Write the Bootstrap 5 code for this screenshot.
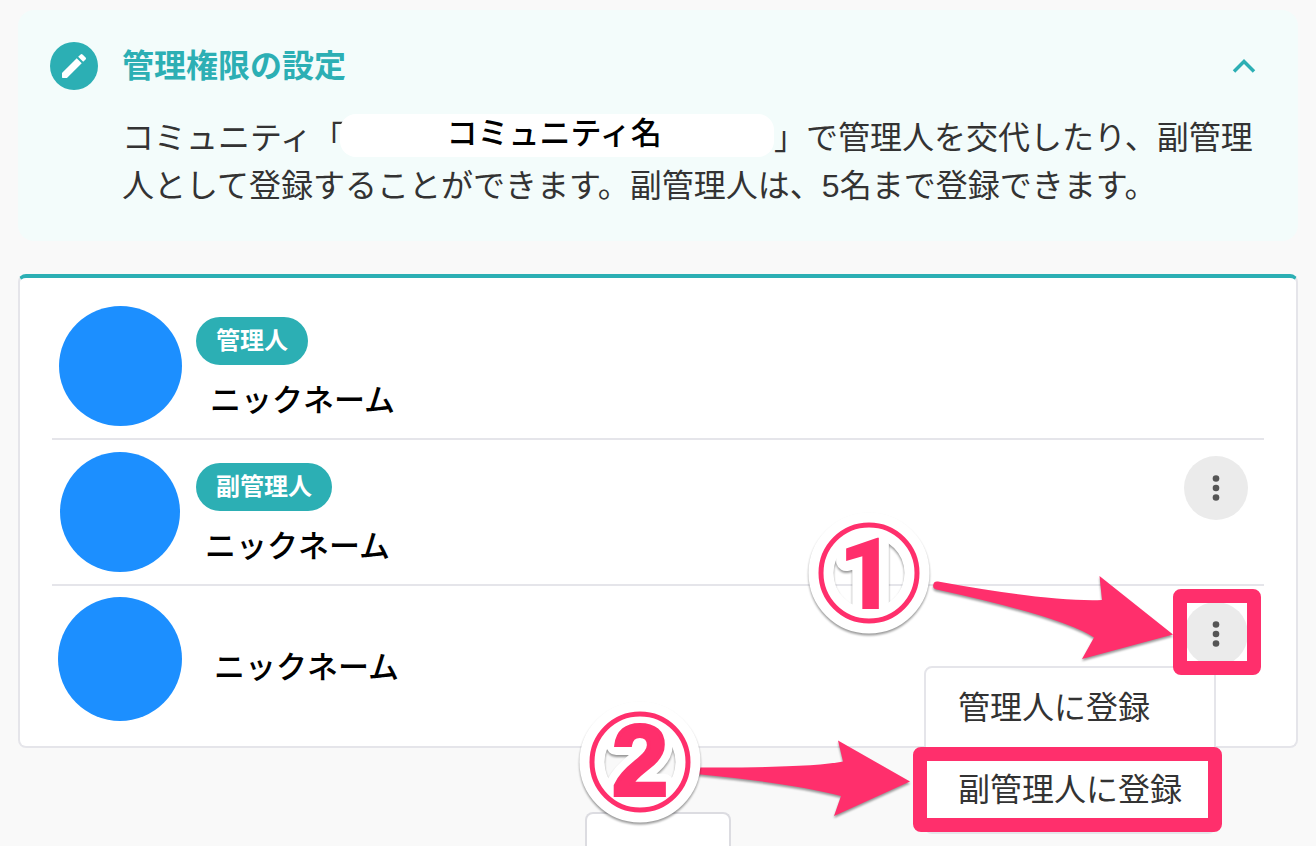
<!DOCTYPE html>
<html lang="ja">
<head>
<meta charset="utf-8">
<meta name="viewport" content="width=device-width, initial-scale=1">
<title>管理権限の設定</title>
<link href="https://cdn.jsdelivr.net/npm/bootstrap@5.3.0/dist/css/bootstrap.min.css" rel="stylesheet">
<style>
:root { --teal: #2cafb4; --pink: #ff2f6c; --line: #e5e5ea; }
body { background: #f9f9f9; color: #333; font: 400 32px/48px "Liberation Sans", "Noto Sans CJK JP", sans-serif; }
.page { padding: 10px 18px 0; }
.guide { background: #f3fcfb; border-radius: 16px; padding: 32px 30px 31px 32px; margin-bottom: 33px; }
.guide-icon { width: 48px; height: 48px; background: var(--teal); }
.guide-title { font-size: 32px; line-height: 48px; font-weight: 700; color: var(--teal); }
.guide-text { padding: 24px 8px 0 72px; }
.community { display: inline-block; width: 434px; height: 43px; margin-left: -4px; padding-right: 6px; border-radius: 16px; background: #fff; color: #000; font-size: 31px; line-height: 40px; font-weight: 500; text-align: center; vertical-align: top; }
.toggle { width: 48px; height: 48px; }
.members { background: #fff; border: 2px solid var(--line); border-top: 4px solid var(--teal); border-radius: 8px; padding: 16px 32px 14px; }
.member { height: 146px; }
.member:not(:last-child) { border-bottom: 2px solid var(--line); }
.photo { width: 136px; margin-right: 8px; }
.photo span { width: 120px; height: 120px; border-radius: 50%; background: #1c8fff; }
.photo .wide { width: 123px; }
.photo .big { width: 124px; height: 124px; }
.role { background: var(--teal); color: #fff; font-size: 24px; line-height: 48px; font-weight: 700; padding: 0 20px; margin: 23px 0 12px; }
.nick { color: #000; font-size: 31px; line-height: 48px; font-weight: 500; padding-left: 14px; }
.nick.near { padding-left: 9px; }
.nick.only { padding: 18px 0 0 18px; }
.more { margin: 16px 16px 0 0; height: 64px; }
.kebab { width: 64px; height: 64px; background: #ebebeb; }
.choices { display: block; position: absolute; top: 64px; right: 32px; width: 292px; margin: 0; padding: 0; border: 2px solid var(--line); border-radius: 8px; z-index: 2; font-size: 32px; }
.choices .dropdown-item { color: #333; padding: 16px 32px 18px; line-height: 48px; border-radius: 8px; }
.frame { position: absolute; border: 14px solid var(--pink); border-radius: 8px; pointer-events: none; z-index: 3; }
.frame-kebab { inset: -13px -13px -9px -11px; }
.frame-item { inset: -3px -8px 0 -13px; }
.pointer { position: absolute; pointer-events: none; z-index: 4; overflow: visible; }
.pointer-one { right: 72px; top: -87px; }
.pointer-two { right: 333px; top: 98px; }
.pointer g { filter: drop-shadow(0 2px 1px rgba(0,0,0,.4)); }
.pointer text { font-weight: 900; font-size: 100px; text-anchor: middle; font-family: Roboto, sans-serif; }
.pointer-two text { font-family: "Liberation Sans", sans-serif; font-weight: 700; }
.digit { fill: #ff2f6c; }
.pointer-two .digit { stroke: #ff2f6c; stroke-width: 4; }
.halo { fill: #fff; stroke: #fff; stroke-width: 20; stroke-linejoin: round; }
.more-list { width: 146px; height: 34px; margin-top: 64px; background: #fff; border: 2px solid #dcdce1; border-bottom: 0; border-radius: 8px 8px 0 0; }
</style>
</head>
<body>
<main class="page">
  <section class="guide">
    <div class="d-flex align-items-center">
      <span class="guide-icon rounded-circle d-flex align-items-center justify-content-center me-4">
        <svg width="32" height="32" viewBox="0 0 24 24" fill="#fff" aria-hidden="true"><path d="M3 17.46v3.04c0 .28.22.5.5.5h3.04c.13 0 .26-.05.35-.15L17.81 9.94l-3.75-3.75L3.15 17.1c-.1.1-.15.22-.15.36zM20.71 7.04a1 1 0 0 0 0-1.41l-2.34-2.34a1 1 0 0 0-1.41 0l-1.83 1.83 3.75 3.75 1.83-1.83z"/></svg>
      </span>
      <h1 class="guide-title mb-0 flex-grow-1">管理権限の設定</h1>
      <button type="button" class="toggle btn p-0 border-0 d-flex align-items-center justify-content-center" aria-label="閉じる">
        <svg width="24" height="16" viewBox="0 0 24 16" fill="none" stroke="#2cafb4" stroke-width="3.500" aria-hidden="true"><path d="M2 13.500 12 3.500 22 13.500"/></svg>
      </button>
    </div>
    <p class="guide-text mb-0">コミュニティ「<span class="community">コミュニティ名</span>」で管理人を交代したり、副管理人として登録することができます。副管理人は、5名まで登録できます。</p>
  </section>

  <ul class="members list-unstyled mb-0">
    <li class="member d-flex">
      <div class="photo d-flex align-items-center justify-content-center"><span class="wide"></span></div>
      <div class="flex-grow-1 d-flex flex-column align-items-start">
        <span class="role rounded-pill">管理人</span>
        <span class="nick">ニックネーム</span>
      </div>
    </li>
    <li class="member d-flex">
      <div class="photo d-flex align-items-center justify-content-center"><span></span></div>
      <div class="flex-grow-1 d-flex flex-column align-items-start">
        <span class="role rounded-pill">副管理人</span>
        <span class="nick near">ニックネーム</span>
      </div>
      <div class="more">
        <button type="button" class="kebab btn p-0 border-0 rounded-circle d-flex align-items-center justify-content-center" aria-label="メニュー">
          <svg width="8" height="28" viewBox="0 0 8 28" fill="#555" aria-hidden="true"><circle cx="4" cy="4.500" r="3.300"/><circle cx="4" cy="14" r="3.300"/><circle cx="4" cy="23.500" r="3.300"/></svg>
        </button>
      </div>
    </li>
    <li class="member d-flex">
      <div class="photo d-flex align-items-center justify-content-center"><span class="big"></span></div>
      <div class="flex-grow-1 d-flex align-items-center">
        <span class="nick only">ニックネーム</span>
      </div>
      <div class="more position-relative">
        <button type="button" class="kebab btn p-0 border-0 rounded-circle d-flex align-items-center justify-content-center" aria-label="メニュー" aria-expanded="true">
          <svg width="8" height="28" viewBox="0 0 8 28" fill="#555" aria-hidden="true"><circle cx="4" cy="4.500" r="3.300"/><circle cx="4" cy="14" r="3.300"/><circle cx="4" cy="23.500" r="3.300"/></svg>
        </button>
        <div class="choices dropdown-menu">
          <button type="button" class="dropdown-item">管理人に登録</button>
          <div class="position-relative">
            <button type="button" class="dropdown-item">副管理人に登録</button>
            <span class="frame frame-item"></span>
          </div>
        </div>
        <span class="frame frame-kebab"></span>
        <svg class="pointer pointer-one" width="376" height="150" viewBox="800 515 376 150">
          <g><path fill="#ff2f6c" d="M938 581.500Q1050 602 1102 600L1099.500 576 1173 634.500 1082 659 1094 637.500Q1063 617 936.500 589.500A4 4 0 0 1 938 581.500Z"/></g>
          <g>
            <circle cx="869" cy="573" r="48" fill="none" stroke="#fff" stroke-width="25"/>
            <text class="halo" x="867" y="609" aria-hidden="true">1</text>
          </g>
          <circle cx="869" cy="573" r="48" fill="none" stroke="#ff2f6c" stroke-width="5"/>
          <text class="digit" x="867" y="609">1</text>
        </svg>
        <svg class="pointer pointer-two" width="345" height="130" viewBox="570 700 345 130">
          <g><path fill="#ff2f6c" d="M696 767.500Q810 768 843 761.500L838 740.500 910 781.500 834 816 841 796Q790 783 696 774Z"/></g>
          <g>
            <circle cx="640" cy="762" r="48" fill="none" stroke="#fff" stroke-width="25"/>
            <text class="halo" x="640" y="795" aria-hidden="true">2</text>
          </g>
          <circle cx="640" cy="762" r="48" fill="none" stroke="#ff2f6c" stroke-width="5"/>
          <text class="digit" x="640" y="795">2</text>
        </svg>
      </div>
    </li>
  </ul>
  <div class="more-list mx-auto"></div>
</main>
<script src="https://cdn.jsdelivr.net/npm/bootstrap@5.3.0/dist/js/bootstrap.bundle.min.js"></script>
</body>
</html>
